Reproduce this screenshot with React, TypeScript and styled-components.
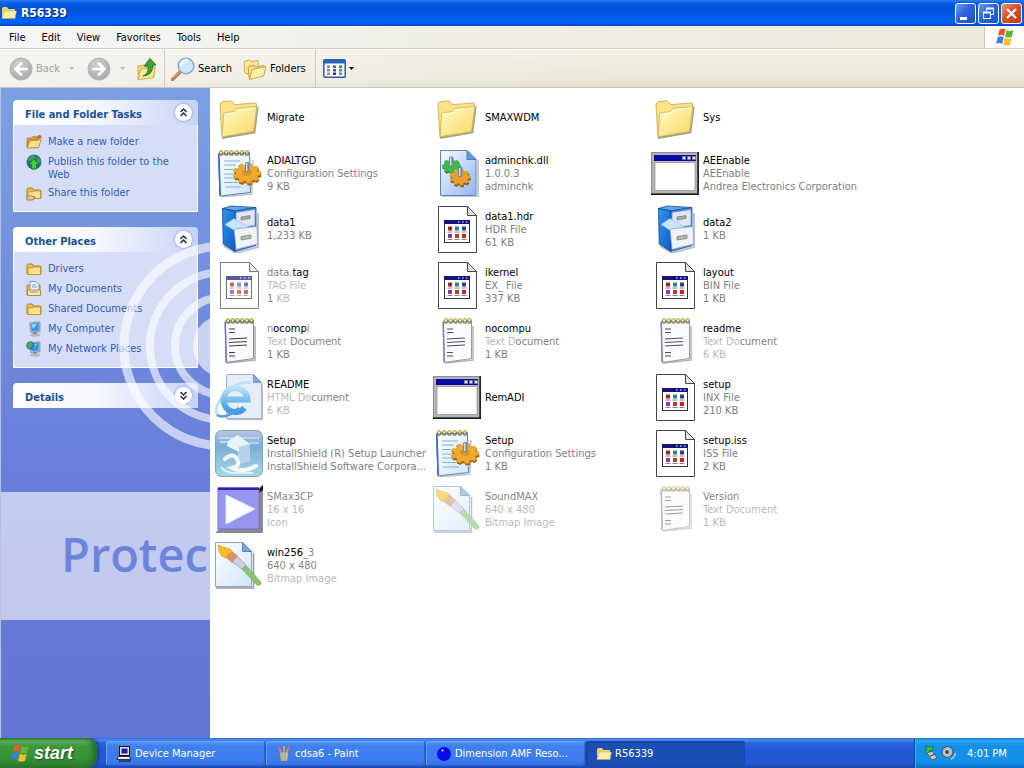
import React from 'react';
import styled, { createGlobalStyle } from 'styled-components';

const uiFont = 'Tahoma, "DejaVu Sans Condensed", "DejaVu Sans", sans-serif';

const GlobalStyle = createGlobalStyle`
  *, *::before, *::after { box-sizing: border-box; }
  body { margin: 0; background: #fff; font: 11px/13px ${uiFont}; color: #000; }
  button { font: inherit; color: inherit; border: 0; margin: 0; padding: 0; background: none; text-align: left; }
  ul { list-style: none; margin: 0; padding: 0; }
  svg { display: block; flex: none; }
  h1, h2 { margin: 0; }
`;

/* ---------- window frame ---------- */

const Desktop = styled.div`
  min-height: 100vh;
  display: flex;
  flex-direction: column;
`;

const TitleBar = styled.header`
  height: 26px;
  flex: none;
  display: flex;
  align-items: center;
  gap: 4px;
  padding: 0 2px 0 1px;
  background: linear-gradient(#2a7df0 0, #0a5ee8 3px, #0053dd 8px, #0058ea 15px, #0063fa 22px, #0046c4 26px);
`;

const WindowTitle = styled.h1`
  flex: 1;
  font-size: 12px;
  line-height: 16px;
  color: #fff;
  text-shadow: 1px 1px 1px #0a2a80;
`;

const CaptionButtons = styled.div`
  display: flex;
  gap: 2px;
`;

const CaptionButton = styled.button<{ $close?: boolean }>`
  width: 21px;
  height: 21px;
  border: 1px solid #fff;
  border-radius: 3px;
  background: ${(p) =>
    p.$close
      ? 'linear-gradient(135deg, #e99377, #d8512b 45%, #b93a17)'
      : 'linear-gradient(135deg, #6f9af0, #2f62dc 45%, #1f4fd0)'};
`;

const MenuBar = styled.nav`
  height: 23px;
  flex: none;
  display: flex;
  align-items: stretch;
  padding-left: 1px;
  background: linear-gradient(90deg, #f7f7f9, #f0efe8 40%, #ece9d8);
  border-bottom: 1px solid #d2cfbf;
`;

const MenuItem = styled.button`
  padding: 0 8px;
`;

const FlagBox = styled.div`
  margin-left: auto;
  width: 40px;
  display: flex;
  align-items: center;
  justify-content: center;
  background: #fff;
  border-left: 1px solid #c9c6b6;
`;

const ToolBar = styled.div`
  height: 39px;
  flex: none;
  display: flex;
  align-items: center;
  padding: 0 9px;
  border-top: 1px solid #fff;
  border-bottom: 1px solid #c8c5b2;
  background: linear-gradient(90deg, rgba(246, 246, 246, 0.8), rgba(238, 234, 218, 0) 60%),
    linear-gradient(#f2f0e4, #ece7d5 80%, #e0dcc9);
`;

const ToolButton = styled.button<{ $off?: boolean; $gap: number; $after: number }>`
  display: flex;
  align-items: center;
  gap: ${(p) => p.$gap}px;
  margin-right: ${(p) => p.$after}px;
  color: ${(p) => (p.$off ? '#a5a499' : '#000')};
`;

const ToolRule = styled.span<{ $after: number }>`
  align-self: stretch;
  width: 1px;
  margin-right: ${(p) => p.$after}px;
  background: #cfccbb;
`;

/* ---------- task pane ---------- */

const Body = styled.div`
  flex: 1;
  display: flex;
  border-left: 1px solid #b9c0dc;
`;

const TaskPane = styled.aside`
  position: relative;
  overflow: hidden;
  width: 209px;
  flex: none;
  display: flex;
  flex-direction: column;
  gap: 15px;
  padding: 12px;
  background: linear-gradient(#7ba0e4, #6a80da 55%, #6375d6);
`;

const Panel = styled.section`
  border-radius: 4px 4px 0 0;
  overflow: hidden;
`;

const PanelHead = styled.div`
  height: 25px;
  display: flex;
  align-items: center;
  justify-content: space-between;
  padding: 0 6px 0 12px;
  background: linear-gradient(90deg, #fff, #f6f8fe 45%, #c6d3f7);
`;

const PanelTitle = styled.h2`
  font-size: 11px;
  line-height: 13px;
  padding-top: 3px;
  color: #215099;
`;

const PanelToggle = styled.button`
  width: 17px;
  height: 17px;
  border-radius: 50%;
  background: #fff;
  box-shadow: 0 0 2px 1px #a9b7e2;
`;

const PanelList = styled.ul`
  display: flex;
  flex-direction: column;
  gap: 4px;
  padding: 9px 20px 10px 12px;
  border: solid #fff;
  border-width: 0 1px 1px;
  background: #d6def7;
`;

const PanelLink = styled.a`
  display: flex;
  align-items: flex-start;
  gap: 6px;
  min-height: 16px;
  color: #2f5cb8;
  text-decoration: none;
  span { padding-top: 1px; }
`;

const Watermark = styled.div`
  position: absolute;
  inset: 0;
  pointer-events: none;
`;

const Rings = styled.svg`
  position: absolute;
  left: 110px;
  top: 140px;
`;

const Banner = styled.div`
  position: absolute;
  left: 0;
  right: 0;
  top: 404px;
  height: 128px;
  padding: 0 0 0 60px;
  overflow: hidden;
  white-space: nowrap;
  background: rgba(255, 255, 255, 0.6);
  color: #6c84dc;
  font: 600 47px/124px "Open Sans", sans-serif;
`;

/* ---------- file list ---------- */

const FileArea = styled.main`
  flex: 1;
  background: #fff;
  padding: 1px 0 0 5px;
`;

const FileGrid = styled.ul`
  display: grid;
  grid-template-columns: repeat(auto-fill, 218px);
  grid-auto-rows: 56px;
`;

const FileItem = styled.li`
  display: flex;
`;

const FileButton = styled.button`
  display: flex;
  align-items: center;
  gap: 4px;
  white-space: nowrap;
`;

const IconSlot = styled.span<{ $opacity: number }>`
  opacity: ${(p) => p.$opacity};
`;

const Lines = styled.span`
  display: flex;
  flex-direction: column;
`;

const Name = styled.span<{ $faded?: boolean }>`
  color: ${(p) => (p.$faded ? '#868686' : '#000')};
`;

const Detail = styled.span<{ $faded?: boolean }>`
  color: ${(p) => (p.$faded ? '#b9b9b9' : '#808080')};
`;

const Dim = styled.span`
  color: #858585;
`;

const Pale = styled.span`
  color: #b9b9b9;
`;

/* ---------- taskbar ---------- */

const TaskBar = styled.footer`
  height: 30px;
  flex: none;
  display: flex;
  align-items: stretch;
  background: linear-gradient(#2f66cf 0, #4b8cf2 2px, #2a62dc 5px, #2358d4 12px, #2459d6 24px, #1b48b0);
`;

const StartButton = styled.button`
  width: 97px;
  display: flex;
  align-items: center;
  gap: 4px;
  padding-left: 10px;
  margin-right: 9px;
  border-radius: 0 10px 10px 0;
  background: linear-gradient(#2b7a2b 0, #62b062 3px, #3c983c 8px, #369336 20px, #2a7a2a);
  box-shadow: inset -4px 0 5px #256e25, 2px 0 3px #1b3f9c;
  color: #fff;
  font: italic 700 18px/20px "Liberation Sans", Arial, sans-serif;
  text-shadow: 1px 1px 2px #1c4a1c;
`;

const TaskButton = styled.button<{ $active?: boolean }>`
  width: 159px;
  margin: 3px 1px 2px 0;
  padding: 0 10px;
  display: flex;
  align-items: center;
  gap: 3px;
  border-radius: 3px;
  color: #fff;
  background: ${(p) =>
    p.$active ? '#1c4fb4' : 'linear-gradient(#5c98f8 0, #3f80f0 5px, #3b7af0 20px, #3370e0)'};
  box-shadow: ${(p) =>
    p.$active ? 'inset 1px 1px 2px #123a8c' : 'inset 1px 1px 0 #6aa2fa, inset -1px -1px 1px #2a60cc'};
`;

const Tray = styled.div`
  margin-left: auto;
  width: 110px;
  display: flex;
  align-items: center;
  gap: 2px;
  padding-left: 8px;
  color: #fff;
  border-left: 1px solid #1042a0;
  box-shadow: inset 1px 0 0 #3fbcf8;
  background: linear-gradient(#1a7ad6 0, #2aa8f4 3px, #1590e8 8px, #1290ea 24px, #0e6cc4);
`;

const Clock = styled.time`
  margin-left: 8px;
`;

/* ---------- drawings ---------- */

function gearPath(cx: number, cy: number, rx: number, ry: number, teeth: number) {
  const pts: string[] = [];
  for (let i = 0; i < teeth; i++) {
    [[-0.34, 0.8], [-0.24, 1], [0.24, 1], [0.34, 0.8]].forEach(([o, k]) => {
      const a = ((i + o) / teeth) * Math.PI * 2;
      pts.push(`${(cx + Math.cos(a) * rx * k).toFixed(1)} ${(cy + Math.sin(a) * ry * k).toFixed(1)}`);
    });
  }
  return `M${pts.join('L')}Z`;
}

const Defs = () => (
  <svg width="0" height="0" style={{ position: 'absolute' }} aria-hidden="true">
    <defs>
      <linearGradient id="gFolder" x1="0" y1="0" x2="1" y2="1">
        <stop offset="0" stopColor="#fffbc4" /><stop offset="1" stopColor="#f8d868" />
      </linearGradient>
      <linearGradient id="gPage" x1="0" y1="0" x2="1" y2="1">
        <stop offset="0" stopColor="#fdfeff" /><stop offset="1" stopColor="#cfe6fa" />
      </linearGradient>
      <linearGradient id="gDll" x1="0" y1="0" x2="1" y2="1">
        <stop offset="0" stopColor="#fafcff" /><stop offset="1" stopColor="#8db6f0" />
      </linearGradient>
      <linearGradient id="gCab" x1="0" y1="0" x2="1" y2="1">
        <stop offset="0" stopColor="#2f96ee" /><stop offset="1" stopColor="#0f5cc0" />
      </linearGradient>
      <linearGradient id="gShield" x1="0" y1="0" x2="0" y2="1">
        <stop offset="0" stopColor="#b9c6e2" /><stop offset=".35" stopColor="#7aaed4" /><stop offset="1" stopColor="#a9d6e6" />
      </linearGradient>
      <linearGradient id="gLetter" x1="0" y1="0" x2="0" y2="1">
        <stop offset="0" stopColor="#b4def8" /><stop offset=".6" stopColor="#55aee8" /><stop offset="1" stopColor="#2f8cd8" />
      </linearGradient>
      <radialGradient id="gGrey" cx=".4" cy=".3" r=".8">
        <stop offset="0" stopColor="#d2d2d0" /><stop offset="1" stopColor="#a4a4a2" />
      </radialGradient>
    </defs>
  </svg>
);

const Big = ({ children }: { children: React.ReactNode }) => (
  <svg width="48" height="48" viewBox="0 0 48 48" aria-hidden="true">{children}</svg>
);

const FolderIcon = () => (
  <Big>
    <path d="M7 45L39.500 39.500l3.300-26" fill="none" stroke="#8d8a78" strokeWidth="1.800" opacity=".8" />
    <path d="M5 12q.2-2.600 2.400-3.200L14.500 7.800q2-.2 3.200 1.200l2 2.600L40 10q1.700 0 1.600 2L38.500 38.500 7 43.800z" fill="#f9e288" stroke="#c8a648" strokeWidth=".8" />
    <path d="M8.600 21.500q.2-1.600 1.800-1.900l8.400-1 3.400-3.300L41 13.600q1 0 .8 1L38.500 38.500 7 43.800z" fill="url(#gFolder)" stroke="#cfae50" strokeWidth=".8" />
    <path d="M9.800 22.500q.2-1.300 1.400-1.500l8.200-.9 3.300-3.300 17.600-1.600" fill="none" stroke="#fffde0" strokeWidth="1" />
  </Big>
);

const Spiral = ({ x, y, n, step }: { x: number; y: number; n: number; step: number }) => (
  <g fill="none" strokeWidth="1.200">
    {Array.from({ length: n }, (_, i) => (
      <g key={i}>
        <ellipse cx={x + i * step} cy={y} rx="1.800" ry="2.200" stroke="#7d7440" />
        <path d={`M${x + i * step - 1.5} ${y - 1}q1.500-1.800 3 0`} stroke="#e0cc64" />
      </g>
    ))}
  </g>
);

const Screw = ({ x, y }: { x: number; y: number }) => (
  <g>
    <rect x={x - 2} y={y - 9} width="4.500" height="10" rx="1.500" fill="#7d8894" />
    <rect x={x - 1} y={y - 8} width="1.400" height="8" fill="#d6dde4" />
  </g>
);

const ConfigIcon = () => (
  <Big>
    <path d="M6 48l31-3 1-34" fill="none" stroke="#999" strokeWidth="1.500" opacity=".6" />
    <path d="M3.500 5L34.500 4 35.500 43.500 5 47z" fill="url(#gPage)" stroke="#5a7cb8" strokeWidth="1" />
    <path d="M3.800 5L5.200 46.500" stroke="#3f63c4" strokeWidth="1.600" />
    <path d="M9 12h16M9 16h12M9 20.500h9M9 25h9M9 29h10M9 33.500h14M10 38h16" stroke="#7fb0dc" strokeWidth="1" />
    <Spiral x={6} y={4} n={6} step={5.200} />
    <path d={gearPath(32.500, 26.500, 14, 10, 9)} fill="#9a6410" />
    <path d={gearPath(32, 24.500, 14, 10, 9)} fill="#f0aa2c" stroke="#c98526" strokeWidth=".6" />
    <ellipse cx="32" cy="23.500" rx="5" ry="3.300" fill="#d8922a" />
    <Screw x={32} y={22} />
  </Big>
);

const DllIcon = () => (
  <Big>
    <path d="M9 48h36V11" fill="none" stroke="#888" strokeWidth="1.500" opacity=".6" />
    <path d="M7.500 1.500H34l9 9V46.500H7.500z" fill="url(#gDll)" stroke="#5f84bd" />
    <path d="M34 1.500v9h9z" fill="#5d98ea" stroke="#4c78b8" />
    <path d={gearPath(19, 18.500, 9.500, 7.500, 8)} fill="#1e7e2c" />
    <path d={gearPath(18.500, 17, 9.500, 7.500, 8)} fill="#3db84c" />
    <Screw x={18} y={16.500} />
    <path d={gearPath(27.500, 30, 10.500, 8.500, 9)} fill="#8f5c12" />
    <path d={gearPath(27, 28, 10.500, 8.500, 9)} fill="#e6a02e" />
    <Screw x={27} y={27} />
  </Big>
);

const AppIcon = () => (
  <Big>
    <rect x="0" y="3" width="48" height="43" fill="#8c8c8c" />
    <rect x="1" y="4" width="45" height="40" fill="#b4b4b4" />
    <rect x="3" y="6" width="42" height="6" fill="#0a0aa8" />
    <path d="M31.500 7.500h3v3h-3zM36.500 7.500h3v3h-3zM41.500 7.500h3v3h-3z" fill="#e0e0e0" stroke="#888" strokeWidth=".6" />
    <rect x="4" y="13.500" width="40" height="28" fill="#fff" stroke="#999" strokeWidth=".8" />
    <path d="M47.200 3v42.300H0" fill="none" stroke="#1a1a1a" strokeWidth="1.500" />
  </Big>
);

const CabinetIcon = () => (
  <Big>
    <path d="M9 41l12 7 22-6V8" fill="none" stroke="#8c96aa" strokeWidth="2" opacity=".6" />
    <path d="M7.500 3.500L16 1l25 1.500L20 6z" fill="#5aa9ee" stroke="#174f96" strokeWidth=".8" />
    <path d="M7.500 3.500L20 6v40.500L8.200 39z" fill="url(#gCab)" stroke="#0d4591" strokeWidth=".8" />
    <path d="M20 6l21-3.500v38L20 46.500z" fill="#4790e0" stroke="#12509f" strokeWidth=".8" />
    <path d="M21 7.500L40 4.500v16L21 23z" fill="#dfe8f8" stroke="#6c8dc4" strokeWidth=".7" />
    <path d="M26 12l9-1.400v3L26 15z" fill="#a5aa98" stroke="#686c60" strokeWidth=".6" />
    <path d="M10 19.500l9-6 14 8v3l-12 2z" fill="#c8e6fb" stroke="#8ebbe0" strokeWidth=".6" />
    <path d="M19 24l23-2.500.8 17.500L21 44.500z" fill="#eef3fc" stroke="#7f97c4" strokeWidth=".7" />
    <path d="M26 31.500l10-1.600v3.500L26 35z" fill="#b5b9aa" stroke="#686c60" strokeWidth=".6" />
  </Big>
);

const GenericIcon = () => (
  <Big>
    <path d="M5.500 1.500h29l9 9v37h-38z" fill="#fff" stroke="#444" />
    <path d="M34.500 1.500v9h9z" fill="#e4e4e4" stroke="#444" />
    <rect x="11.500" y="15.500" width="25" height="22" fill="#fff" stroke="#333" />
    <rect x="11" y="15" width="26" height="4" fill="#14147c" />
    <path d="M25 17h1.500M29 17h1.500M33 17h1.500" stroke="#fff" />
    {[0, 1].map((r) =>
      [0, 1, 2].map((c) => (
        <g key={`${r}${c}`}>
          <rect
            x={15 + c * 7}
            y={21.500 + r * 7.500}
            width="4"
            height="4"
            fill={[['#a02828', '#3a7a9a', '#2a3ca0'], ['#8a3ca0', '#b04a2a', '#c02828']][r][c]}
          />
          <path d={`M${14.500 + c * 7} ${27 + r * 7.500}h5`} stroke="#666" strokeWidth=".8" />
        </g>
      )),
    )}
  </Big>
);

const TextIcon = () => (
  <Big>
    <path d="M12 46l28-3V9" fill="none" stroke="#8a8a7c" strokeWidth="1.500" opacity=".7" />
    <path d="M10 5l28.500-.5V41.500L11 45.500z" fill="#fbfbfd" stroke="#80808c" strokeWidth=".9" />
    <path d="M10.300 5l1 40" stroke="#6a73b4" strokeWidth="1.400" />
    <path d="M14 12h6M14 15.500h6M14 22l18-1M14 25.500l18-1M14 29l18-1M14 35.500h6M14 39h6" stroke="#3a3c48" strokeWidth="1.200" />
    <Spiral x={13} y={4} n={6} step={4.700} />
  </Big>
);

const HtmlIcon = () => (
  <Big>
    <path d="M12.500 46.500h35V12" fill="none" stroke="#888" strokeWidth="1.500" opacity=".6" />
    <path d="M11.500 1.500h27l8 8v36h-35z" fill="#e3ecfb" stroke="#8faad4" />
    <path d="M38.500 1.500v8h8z" fill="#6ba0e8" stroke="#5580c0" strokeWidth=".8" />
    <path d="M3 43Q-3 35 10 21T36 10" fill="none" stroke="#b4daf6" strokeWidth="2.500" />
    <path d="M8 26.500h24.500a12 12 0 1 0-3 8.500" fill="none" stroke="url(#gLetter)" strokeWidth="6" />
    <path d="M2 42q8 5 22-7" fill="none" stroke="#3f94d8" strokeWidth="2.500" />
  </Big>
);

const InstallIcon = () => (
  <Big>
    <rect x=".5" y="1.500" width="47" height="46" rx="6" fill="url(#gShield)" stroke="#7aa8b8" />
    <path d="M4 9h40M5 13h12M34 14h10" stroke="#d9e8f4" strokeWidth="2" opacity=".6" />
    <path d="M13 12l10-6 12 9v17l-12 3-2-3 3-9-12-6z" fill="#e9f3fa" />
    <path d="M24 18l11-3v17l-12 3z" fill="#b4d2e8" />
    <path d="M10 30q8-7 12 0t-5 9q10 5 24-2" fill="none" stroke="#f2f9fd" strokeWidth="4" strokeLinecap="round" />
    <path d="M6 38q5 6 14 6h18" fill="none" stroke="#dff0f8" strokeWidth="2" />
  </Big>
);

const PlayIcon = () => (
  <Big>
    <path d="M48 0v48H0l4-4h40V4z" fill="#8a8a90" />
    <path d="M44 4l4-4v5l-4 3z" fill="#111" />
    <rect x="3" y="3" width="41" height="41" fill="#9696f0" stroke="#7272c8" />
    <rect x="3" y="2.500" width="41" height="2.500" fill="#2a22b4" />
    <path d="M11 10l29 14-29 15z" fill="#fff" stroke="#d4efff" />
  </Big>
);

const BitmapIcon = () => (
  <Big>
    <path d="M1 47h37.500V12" fill="none" stroke="#77808c" strokeWidth="1.500" opacity=".8" />
    <path d="M.5 1.500h27l9 9V45.500H.5z" fill="url(#gPage)" stroke="#8aa2cc" />
    <path d="M27.500 1.500v9h9z" fill="#7ba6dc" stroke="#4c70a8" strokeWidth=".8" />
    <path d="M25 26l4-4 17 19q.5 4-4 3z" fill="#8cc274" stroke="#78a868" strokeWidth=".6" />
    <path d="M16 20l5-6 10 10-4 4z" fill="#ccd0e2" stroke="#8f96ac" strokeWidth=".7" />
    <path d="M10 16l7-6 6 5-6 7z" fill="#d8946c" />
    <path d="M3 4q6 3 9 3t5 3l-7 7q-7-3-7-13z" fill="#f6be2a" stroke="#d09a24" strokeWidth=".6" />
  </Big>
);

const Flag = ({ size }: { size: number }) => (
  <svg width={size} height={size} viewBox="0 0 20 20" aria-hidden="true">
    <path d="M4.500 2.500q3-2 6 0L9 9q-3-1.800-6 0z" fill="#e8582c" />
    <path d="M11.500 3q3 2 7 0L17 9.700q-3.500 1.800-7 0z" fill="#5fb53c" />
    <path d="M2.700 10.200q3-1.800 6 0L7.200 17q-3-2-6.200 0z" fill="#3c7fe0" />
    <path d="M9.700 10.800q3.500 1.800 7 0L15 17.700q-3.300 1.800-6.800 0z" fill="#f5c02c" />
  </svg>
);

const SmallFolder = ({ extra }: { extra?: React.ReactNode }) => (
  <svg width="16" height="16" viewBox="0 0 16 16" aria-hidden="true">
    <path d="M1 13V4.500Q1 3 2.500 3H6l1.500 2h6Q15 5 15 6.500V13.500H2z" fill="#e9bc48" stroke="#a57a1c" strokeWidth=".9" />
    <path d="M2 13.500V8q0-1 1-1h4l1-1h6.500v7.500z" fill="#fbe28a" stroke="#b98a28" strokeWidth=".7" />
    {extra}
  </svg>
);

const TitleFolder = () => (
  <svg width="16" height="16" viewBox="0 0 16 16" aria-hidden="true">
    <path d="M1 13V3.500Q1 2 2.500 2H6l1.500 2H14v9H2z" fill="#f0d068" />
    <path d="M3 6H15.500L14 13.500H1z" fill="#fdf0a8" stroke="#c9a040" strokeWidth=".5" />
  </svg>
);

const NewFolder = () => (
  <svg width="16" height="16" viewBox="0 0 16 16" aria-hidden="true">
    <path d="M1 13V5q0-1 1-1h4l1-1.500 5 .5v10z" fill="#d99a30" stroke="#9a6c1c" strokeWidth=".7" />
    <path d="M1 13.800L4 6.500 15 6l-2.500 7.800z" fill="#fcdf88" stroke="#a87c24" strokeWidth=".8" />
    <circle cx="13.500" cy="3" r="2" fill="#d8642c" />
  </svg>
);

const GlobeUp = () => (
  <svg width="16" height="16" viewBox="0 0 16 16" aria-hidden="true">
    <circle cx="8" cy="8" r="7.500" fill="#2c6e8c" />
    <path d="M1.500 6Q4 1 8 1l2 3-4 4zM10 4l4 1 1 4-4-1z" fill="#3fa054" />
    <path d="M8 5l5.500 5.500H10.500V15H5.500v-4.500H2.500z" fill="#43cc4c" stroke="#156c20" strokeWidth=".8" />
  </svg>
);

const DocsIcon = () => (
  <svg width="16" height="16" viewBox="0 0 16 16" aria-hidden="true">
    <path d="M1 14V5q0-1 1-1h12v10z" fill="#e9bc48" stroke="#a57a1c" strokeWidth=".8" />
    <path d="M4 .5h6l3 3V12H4z" fill="#eaf4ff" stroke="#5c8cc8" strokeWidth=".8" />
    <path d="M6 4h4M6 6h5" stroke="#5c9ad8" strokeWidth=".8" />
    <path d="M1.500 9h13v5.500h-13z" fill="#fbe9ae" stroke="#a57a1c" strokeWidth=".8" />
    <path d="M4 11h8" stroke="#7a94c0" />
  </svg>
);

const ComputerIcon = ({ net }: { net?: boolean }) => (
  <svg width="16" height="16" viewBox="0 0 16 16" aria-hidden="true">
    <ellipse cx="9" cy="14" rx="5" ry="1.800" fill="#b8b8bc" />
    <path d="M7 10h4v3H7z" fill="#8c929c" />
    <path d="M3.500 2L13 .8q1 0 1 1V10q0 1-1 1L5 11.500z" fill="#a8b4c8" stroke="#6f7c98" strokeWidth=".6" />
    <path d="M5 3l7.500-1v7.500L6 10z" fill="#2f94e8" />
    <path d="M5.500 3.500L11 3 7 8z" fill="#9cd8fc" />
    {net && <g><circle cx="4.500" cy="4.500" r="4.200" fill="#2c7cb0" /><path d="M1 4q2-4 5-3l1 3-4 4z" fill="#44b04c" /></g>}
  </svg>
);

const RoundArrow = ({ flip }: { flip?: boolean }) => (
  <svg width="24" height="24" viewBox="0 0 24 24" aria-hidden="true">
    <circle cx="12" cy="12" r="11" fill="url(#gGrey)" stroke="#b4b4b1" />
    <path
      d={flip ? 'M6.500 12h11M12 6.500l5.500 5.500-5.500 5.500' : 'M17.500 12h-11M12 6.500L6.500 12l5.500 5.500'}
      fill="none" stroke="#fff" strokeWidth="2.600" strokeLinecap="square"
    />
  </svg>
);

const Caret = ({ color }: { color: string }) => (
  <svg width="5" height="3" viewBox="0 0 5 3" aria-hidden="true"><path d="M0 0h5L2.500 3z" fill={color} /></svg>
);

const UpFolder = () => (
  <svg width="20" height="24" viewBox="0 0 20 24" aria-hidden="true">
    <path d="M1 22V9l6-1 1.500 2L17 9v11z" fill="#f3d674" stroke="#c09c3c" strokeWidth=".8" />
    <path d="M1 22.500L4 12l14.500-2L16 21z" fill="#fdeb9c" stroke="#c9a23c" strokeWidth=".8" />
    <path d="M6 19q6-2 5-10H7l6-7.500L19 8h-3.500q1 10-9.500 11z" fill="#3aa63a" stroke="#1e6c20" strokeWidth=".9" />
  </svg>
);

const SearchIcon = () => (
  <svg width="24" height="24" viewBox="0 0 24 24" aria-hidden="true">
    <path d="M1.500 22.500L9 15" stroke="#b87c50" strokeWidth="3.400" strokeLinecap="round" />
    <path d="M1.800 21.500L8.500 14.800" stroke="#e6b890" strokeWidth="1" />
    <circle cx="15" cy="9" r="7.800" fill="#cfe8fb" stroke="#86a6d0" strokeWidth="1.400" />
    <path d="M9.500 8q2-5 7-5" fill="none" stroke="#fff" strokeWidth="2.500" />
  </svg>
);

const FoldersIcon = () => (
  <svg width="24" height="24" viewBox="0 0 24 24" aria-hidden="true">
    <path d="M1.500 15L1 4.500 6.500 3 8 4.500l7-1V14l-11 3z" fill="#fbe69a" stroke="#c9a23c" strokeWidth=".9" />
    <path d="M6 21L5 9.500 11 8l2 2 8-1.500V18l-13 4z" fill="#f8de80" stroke="#c09a34" strokeWidth=".9" />
    <path d="M6.500 22.500l2.500-10 14-3-2.500 9.500z" fill="#fdf0ac" stroke="#c9a23c" strokeWidth=".9" />
  </svg>
);

const ViewsIcon = () => (
  <svg width="23" height="19" viewBox="0 0 23 19" aria-hidden="true">
    <rect x=".8" y=".8" width="21.400" height="17.400" rx="1" fill="#fff" stroke="#2a5ca8" strokeWidth="1.500" />
    <rect x="1" y="1" width="21" height="3.500" fill="#2763b8" />
    {[6.500, 10, 13.500].map((y, r) =>
      [4, 10, 16].map((x, c) => (
        <rect key={`${x}${y}`} x={x} y={y} width="3" height="2.500" fill={['#7d8ca8', '#4c5c94', '#3c8c4c', '#c07c64', '#38549c', '#4c9c5c', '#b8887c', '#2c3c7c', '#7090a0'][r * 3 + c]} />
      )),
    )}
  </svg>
);

const Chevrons = ({ down }: { down?: boolean }) => (
  <svg width="17" height="17" viewBox="0 0 17 17" aria-hidden="true">
    <path
      d={down ? 'M5.500 5l3 3 3-3M5.500 9l3 3 3-3' : 'M5.500 8l3-3 3 3M5.500 12l3-3 3 3'}
      fill="none" stroke="#1a2c54" strokeWidth="1.500"
    />
  </svg>
);

const DeviceIcon = () => (
  <svg width="16" height="16" viewBox="0 0 16 16" aria-hidden="true">
    <rect x="3.500" y=".5" width="10" height="9" fill="#e0e0e0" stroke="#111" />
    <rect x="5.500" y="2.500" width="6" height="5" fill="#2020b0" />
    <path d="M2.500 10.500h10.500l2 3H1z" fill="#eee" stroke="#111" strokeWidth=".8" />
    <path d="M3 15h12" stroke="#111" />
  </svg>
);

const PaintIcon = () => (
  <svg width="16" height="16" viewBox="0 0 16 16" aria-hidden="true">
    <path d="M5 7L3 1M8 7V0M10.500 7L13 1" stroke="#e0a860" strokeWidth="1.800" />
    <path d="M3 1l1 3M13 1l-1 3" stroke="#d86a4c" strokeWidth="1.600" />
    <path d="M3.500 6h9l-1 9h-7z" fill="#c9c4b8" stroke="#77706a" strokeWidth=".7" />
    <path d="M6 7v7M9 7v7" stroke="#8a9c70" />
  </svg>
);

const BallIcon = () => (
  <svg width="16" height="16" viewBox="0 0 16 16" aria-hidden="true">
    <circle cx="8" cy="8" r="7" fill="#0a0aec" />
    <circle cx="6.500" cy="4.500" r="1" fill="#fff" />
  </svg>
);

const TrayDevice = () => (
  <svg width="16" height="16" viewBox="0 0 16 16" aria-hidden="true">
    <path d="M4 8l5-2 5 7-5 2z" fill="#c8ccc8" stroke="#4c5450" strokeWidth=".8" />
    <path d="M7 11l4-1.500" stroke="#333" />
    <path d="M2 1l5 1 3-1-1 5-2-1-3 4-2-2 2-3z" fill="#38c43c" stroke="#146c1c" strokeWidth=".7" />
  </svg>
);

const TraySpeaker = () => (
  <svg width="16" height="16" viewBox="0 0 16 16" aria-hidden="true">
    <circle cx="6.500" cy="7" r="5.500" fill="#b4b8bc" stroke="#444c54" />
    <circle cx="6" cy="7" r="2.500" fill="#3c444c" stroke="#e0e4e8" />
    <path d="M10 14q4-2 4.500-6" fill="none" stroke="#c4d4e4" strokeWidth="1.500" />
  </svg>
);

/* ---------- data ---------- */

type FileEntry = {
  icon: React.ComponentType;
  name: React.ReactNode;
  details?: React.ReactNode[];
  faded?: boolean;
  pale?: boolean;
  opacity?: number;
};

const files: FileEntry[] = [
  { icon: FolderIcon, name: 'Migrate' },
  { icon: FolderIcon, name: 'SMAXWDM' },
  { icon: FolderIcon, name: 'Sys' },
  { icon: ConfigIcon, name: 'ADIALTGD', details: ['Configuration Settings', '9 KB'] },
  { icon: DllIcon, name: 'adminchk.dll', details: ['1.0.0.3', 'adminchk'] },
  { icon: AppIcon, name: 'AEEnable', details: ['AEEnable', 'Andrea Electronics Corporation'] },
  { icon: CabinetIcon, name: 'data1', details: ['1,233 KB'] },
  { icon: GenericIcon, name: 'data1.hdr', details: ['HDR File', '61 KB'] },
  { icon: CabinetIcon, name: 'data2', details: ['1 KB'] },
  { icon: GenericIcon, name: <><Dim>data.</Dim>tag</>, details: [<Pale key="t">TAG File</Pale>, <><Dim>1</Dim> <Pale>KB</Pale></>], opacity: 0.7 },
  { icon: GenericIcon, name: 'ikernel', details: ['EX_ File', '337 KB'] },
  { icon: GenericIcon, name: 'layout', details: ['BIN File', '1 KB'] },
  { icon: TextIcon, name: <><Dim>n</Dim>ocomp<Dim>i</Dim></>, details: [<><Pale>Text</Pale> Document</>, '1 KB'] },
  { icon: TextIcon, name: 'nocompu', details: [<><Pale>Text D</Pale>ocument</>, '1 KB'], opacity: 0.9 },
  { icon: TextIcon, name: 'readme', details: [<><Pale>Text Do</Pale>cument</>, <Pale key="s">6 KB</Pale>], opacity: 0.9 },
  { icon: HtmlIcon, name: 'README', details: [<><Pale>HTML Do</Pale>cument</>, <Pale key="s">6 KB</Pale>], opacity: 0.9 },
  { icon: AppIcon, name: 'RemADI' },
  { icon: GenericIcon, name: 'setup', details: ['INX File', '210 KB'] },
  { icon: InstallIcon, name: 'Setup', details: ['InstallShield (R) Setup Launcher', 'InstallShield Software Corpora...'] },
  { icon: ConfigIcon, name: 'Setup', details: ['Configuration Settings', '1 KB'] },
  { icon: GenericIcon, name: 'setup.iss', details: ['ISS File', '2 KB'] },
  { icon: PlayIcon, name: 'SMax3CP', details: ['16 x 16', 'Icon'], faded: true, pale: true },
  { icon: BitmapIcon, name: 'SoundMAX', details: ['640 x 480', 'Bitmap Image'], faded: true, pale: true, opacity: 0.6 },
  { icon: TextIcon, name: 'Version', details: ['Text Document', '1 KB'], faded: true, pale: true, opacity: 0.5 },
  { icon: BitmapIcon, name: <>win256<Dim>_3</Dim></>, details: [<Dim key="d">640 x 480</Dim>, 'Bitmap Image'], pale: true },
];

const shareMark = <path d="M0 12q4-3 9 0l-2 3H1z" fill="#f0c494" stroke="#7c5020" strokeWidth=".6" />;

const panels = [
  {
    title: 'File and Folder Tasks',
    links: [
      { icon: <NewFolder />, text: 'Make a new folder' },
      { icon: <GlobeUp />, text: 'Publish this folder to the Web' },
      { icon: <SmallFolder extra={shareMark} />, text: 'Share this folder' },
    ],
  },
  {
    title: 'Other Places',
    links: [
      { icon: <SmallFolder />, text: 'Drivers' },
      { icon: <DocsIcon />, text: 'My Documents' },
      { icon: <SmallFolder />, text: 'Shared Documents' },
      { icon: <ComputerIcon />, text: 'My Computer' },
      { icon: <ComputerIcon net />, text: 'My Network Places' },
    ],
  },
  { title: 'Details', links: [] },
];

const menus = ['File', 'Edit', 'View', 'Favorites', 'Tools', 'Help'];

export default function App() {
  return (
    <Desktop>
      <GlobalStyle />
      <Defs />
      <TitleBar>
        <TitleFolder />
        <WindowTitle>R56339</WindowTitle>
        <CaptionButtons>
          <CaptionButton aria-label="Minimize">
            <svg width="19" height="19" viewBox="0 0 19 19"><path d="M4 13h7v3H4z" fill="#fff" /></svg>
          </CaptionButton>
          <CaptionButton aria-label="Restore">
            <svg width="19" height="19" viewBox="0 0 19 19" fill="none" stroke="#fff">
              <path d="M7.500 7V4.500h7v6H12" /><path d="M7 4.500h8" strokeWidth="2" />
              <rect x="4.500" y="8.500" width="7" height="6" /><path d="M4 8.500h8" strokeWidth="2" />
            </svg>
          </CaptionButton>
          <CaptionButton $close aria-label="Close">
            <svg width="19" height="19" viewBox="0 0 19 19"><path d="M5 5l9 9M14 5l-9 9" stroke="#fff" strokeWidth="2.200" /></svg>
          </CaptionButton>
        </CaptionButtons>
      </TitleBar>
      <MenuBar>
        {menus.map((m) => <MenuItem key={m}>{m}</MenuItem>)}
        <FlagBox><Flag size={20} /></FlagBox>
      </MenuBar>
      <ToolBar>
        <ToolButton $off $gap={3} $after={9}><RoundArrow />Back</ToolButton>
        <ToolButton $off $gap={0} $after={13} aria-label="Back history"><Caret color="#b9b7aa" /></ToolButton>
        <ToolButton $off $gap={0} $after={9} aria-label="Forward"><RoundArrow flip /></ToolButton>
        <ToolButton $off $gap={0} $after={12} aria-label="Forward history"><Caret color="#b9b7aa" /></ToolButton>
        <ToolButton $gap={0} $after={7} aria-label="Up"><UpFolder /></ToolButton>
        <ToolRule $after={6} />
        <ToolButton $gap={3} $after={11}><SearchIcon />Search</ToolButton>
        <ToolButton $gap={3} $after={9}><FoldersIcon />Folders</ToolButton>
        <ToolRule $after={7} />
        <ToolButton $gap={3} $after={0} aria-label="Views"><ViewsIcon /><Caret color="#000" /></ToolButton>
      </ToolBar>
      <Body>
        <TaskPane>
          {panels.map((p) => (
            <Panel key={p.title}>
              <PanelHead>
                <PanelTitle>{p.title}</PanelTitle>
                <PanelToggle aria-label={`Toggle ${p.title}`}><Chevrons down={!p.links.length} /></PanelToggle>
              </PanelHead>
              {p.links.length > 0 && (
                <PanelList>
                  {p.links.map((l) => (
                    <li key={l.text}><PanelLink href="#">{l.icon}<span>{l.text}</span></PanelLink></li>
                  ))}
                </PanelList>
              )}
            </Panel>
          ))}
          <Watermark>
            <Rings width="100" height="236" viewBox="0 0 100 236" fill="none" stroke="#fff" strokeOpacity=".62">
              <circle cx="113" cy="118" r="100" strokeWidth="9" />
              <circle cx="113" cy="118" r="74" strokeWidth="8" />
              <circle cx="113" cy="118" r="49" strokeWidth="8" />
              <circle cx="113" cy="118" r="22" strokeWidth="18" />
            </Rings>
            <Banner>Protec</Banner>
          </Watermark>
        </TaskPane>
        <FileArea>
          <FileGrid>
            {files.map((f, i) => {
              const Icon = f.icon;
              return (
                <FileItem key={i}>
                  <FileButton>
                    <IconSlot $opacity={f.opacity ?? 1}><Icon /></IconSlot>
                    <Lines>
                      <Name $faded={f.faded}>{f.name}</Name>
                      {f.details?.map((d, j) => <Detail key={j} $faded={f.pale}>{d}</Detail>)}
                    </Lines>
                  </FileButton>
                </FileItem>
              );
            })}
          </FileGrid>
        </FileArea>
      </Body>
      <TaskBar>
        <StartButton><Flag size={20} />start</StartButton>
        <TaskButton><DeviceIcon />Device Manager</TaskButton>
        <TaskButton><PaintIcon />cdsa6 - Paint</TaskButton>
        <TaskButton><BallIcon />Dimension AMF Reso...</TaskButton>
        <TaskButton $active><TitleFolder />R56339</TaskButton>
        <Tray><TrayDevice /><TraySpeaker /><Clock>4:01 PM</Clock></Tray>
      </TaskBar>
    </Desktop>
  );
}
